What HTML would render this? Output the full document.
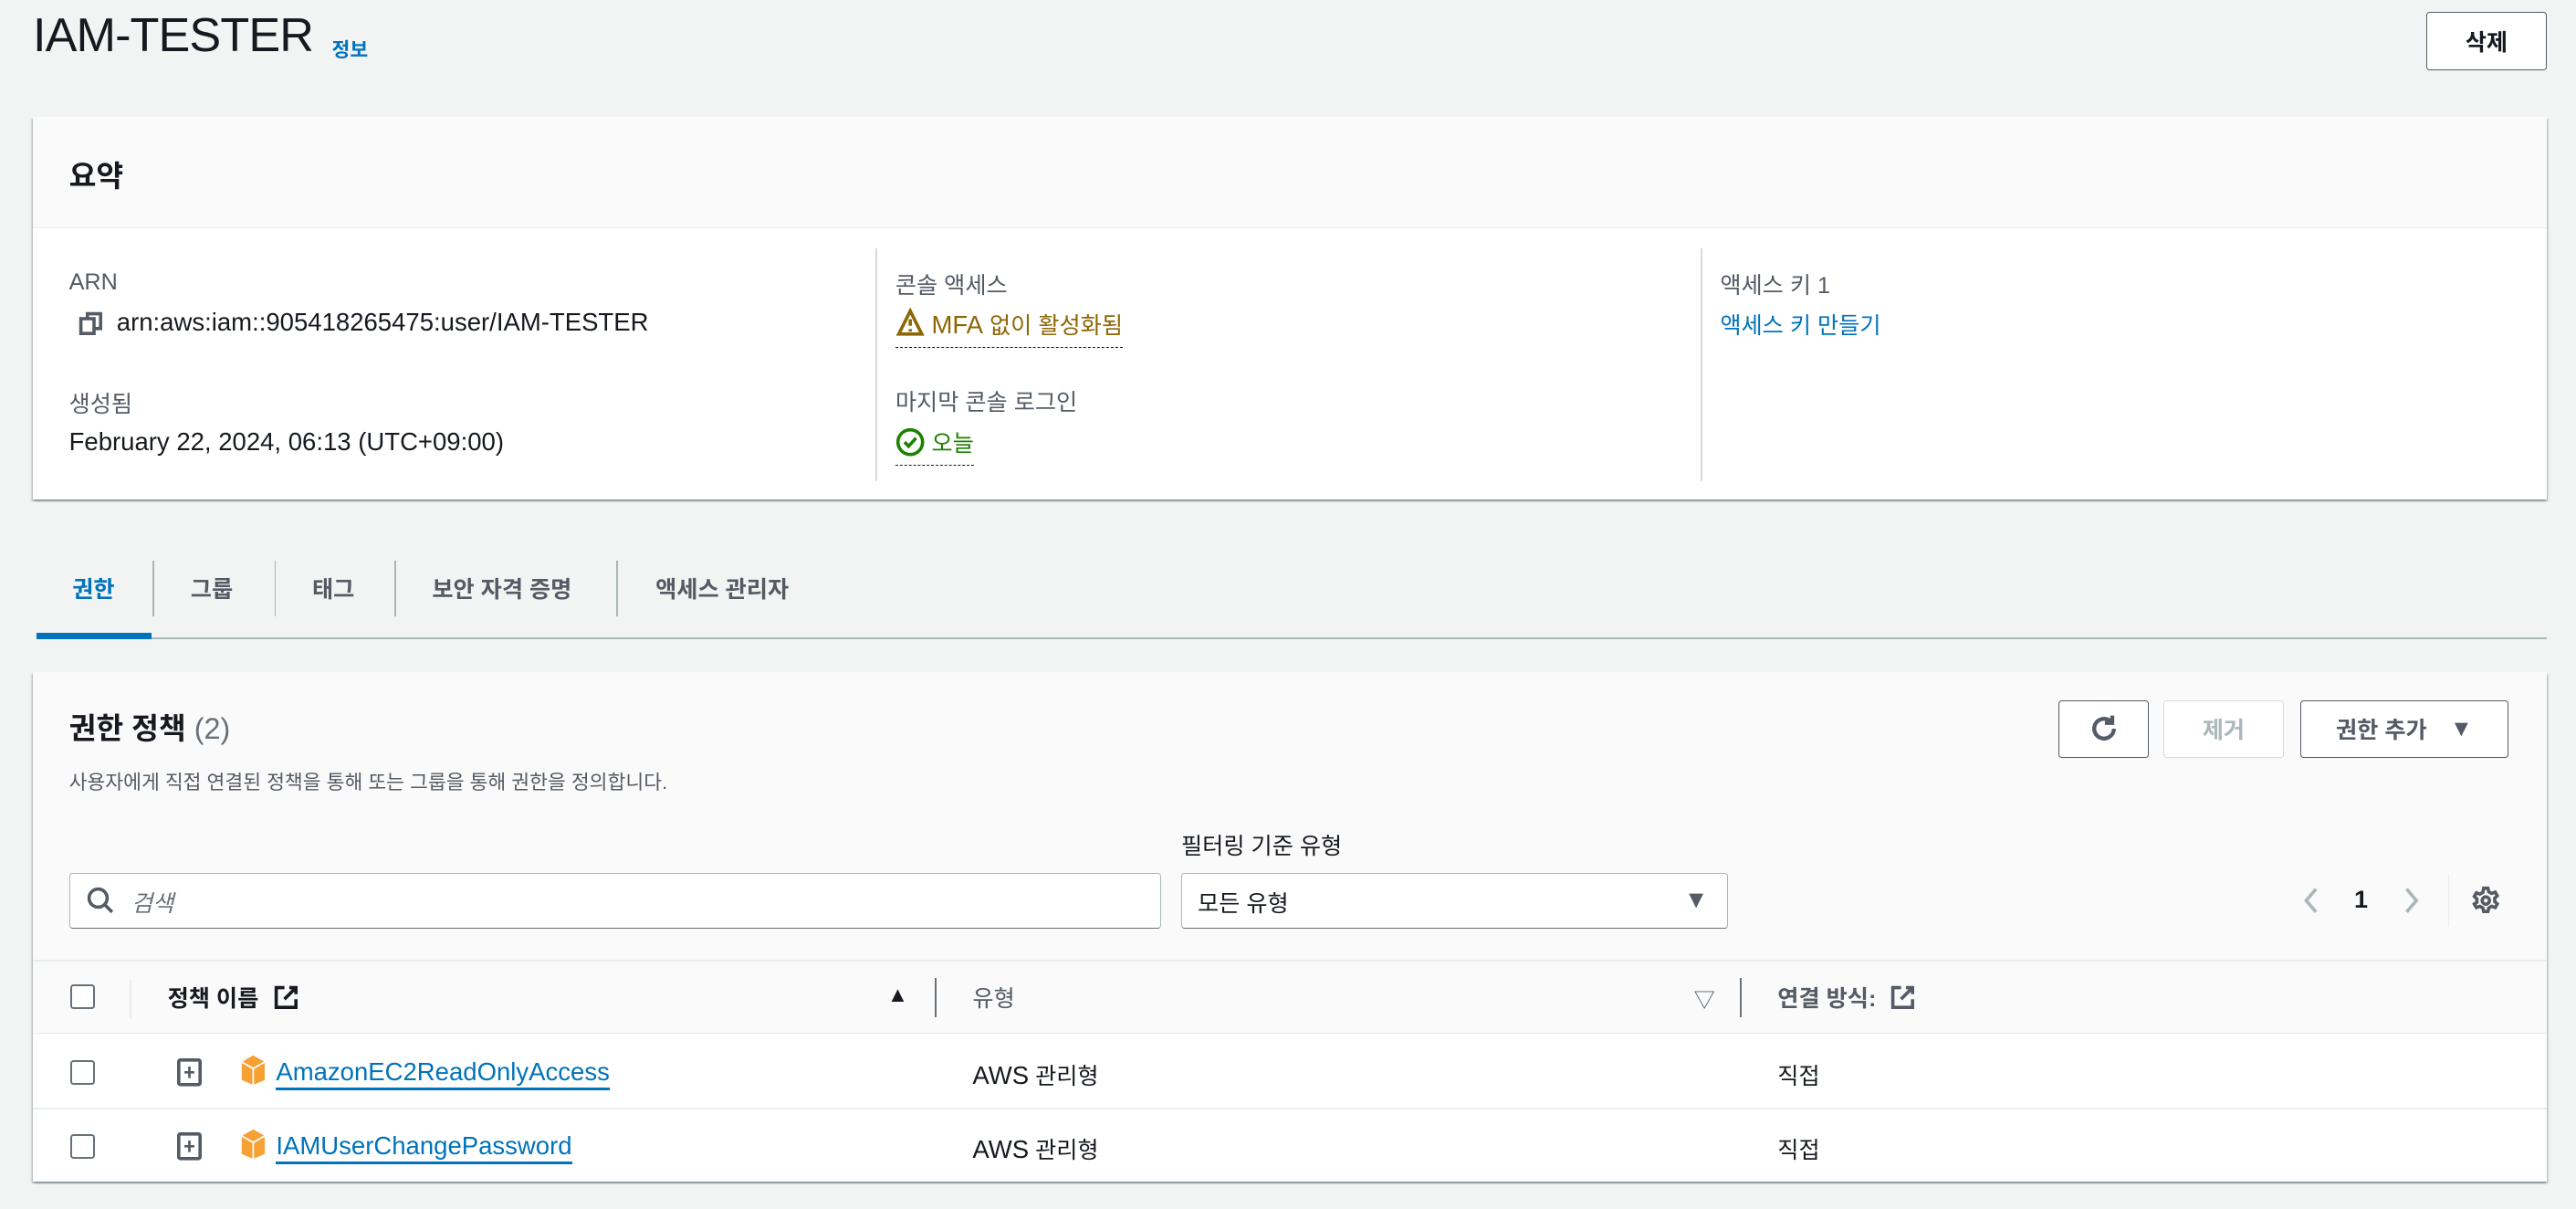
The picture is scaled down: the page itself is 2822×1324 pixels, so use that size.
<!DOCTYPE html>
<html><head><meta charset="utf-8">
<style>
*{box-sizing:border-box;margin:0;padding:0}
html,body{width:2822px;height:1324px;overflow:hidden;background:#f2f3f3}
#r{zoom:1.79974;width:1568px;height:736px;position:relative;font-family:"Liberation Sans","Noto Sans CJK KR",sans-serif;color:#16191f;font-size:14px}
.a{position:absolute;white-space:nowrap}
.l{font-size:15.3px}
.card{position:absolute;background:#fff;box-shadow:0 1px 1px rgba(0,28,36,.3),1px 1px 1px rgba(0,28,36,.15),-1px 1px 1px rgba(0,28,36,.15)}
.lbl{color:#545b64}
.btn{position:absolute;border:1px solid #545b64;border-radius:2px;background:#fff;font-weight:bold;color:#545b64;display:flex;align-items:center;justify-content:center;font-size:14px}
.cb{position:absolute;width:15px;height:15px;border:1.5px solid #687078;border-radius:2px;background:#fff}
.vd{position:absolute;width:1px;background:#d5dbdb}
</style></head><body><div id="r">
<div class="a" style="left:20px;top:5px;font-size:29px;letter-spacing:-.5px">IAM-TESTER</div>
<div class="a" style="left:202px;top:21px;font-size:12px;color:#0073bb;font-weight:bold">정보</div>
<div class="btn" style="left:1477px;top:7px;width:73px;height:36px;color:#16191f">삭제</div>

<div class="card" style="left:20px;top:71px;width:1530px;height:233px">
 <div style="position:absolute;left:0;top:0;right:0;height:68px;background:#fafafa;border-bottom:1px solid #eaeded"></div>
 <div class="a" style="left:22px;top:22px;font-size:18px;font-weight:bold">요약</div>
 <div class="vd" style="left:513px;top:80px;height:142px"></div>
 <div class="vd" style="left:1015px;top:80px;height:142px"></div>
 <div class="a lbl" style="left:22px;top:93px">ARN</div>
 <svg class="a" style="left:27px;top:118px" width="16" height="16" viewBox="0 0 16 16" fill="none" stroke="#545b64" stroke-width="2"><rect x="2" y="5" width="8" height="9"/><path d="M6 5V2h8v9h-4"/></svg>
 <div class="a l" style="left:51px;top:116px">arn:aws:iam::905418265475:user/IAM-TESTER</div>
 <div class="a lbl" style="left:22px;top:164px">생성됨</div>
 <div class="a l" style="left:22px;top:189px">February 22, 2024, 06:13 (UTC+09:00)</div>
 <div class="a lbl" style="left:525px;top:92px">콘솔 액세스</div>
 <svg class="a" style="left:525px;top:116px" width="18" height="18" viewBox="0 0 18 18" fill="none" stroke="#8d6605" stroke-width="2"><path d="M9 2L2 16h14z"/><path d="M9 7v4M9 13v1.5"/></svg>
 <div class="a" style="left:525px;top:116px;color:#8d6605;border-bottom:1px dashed #16191f;padding-bottom:4px;padding-left:22px"><span class="l">MFA</span> 없이 활성화됨</div>
 <div class="a lbl" style="left:525px;top:163px">마지막 콘솔 로그인</div>
 <svg class="a" style="left:525px;top:189px" width="18" height="18" viewBox="0 0 18 18" fill="none" stroke="#1d8102" stroke-width="2"><circle cx="9" cy="9" r="7.5"/><path d="M5.5 9l2.5 2.5 4.5-5"/></svg>
 <div class="a" style="left:525px;top:188px;color:#1d8102;border-bottom:1px dashed #16191f;padding-bottom:4px;padding-left:22px">오늘</div>
 <div class="a lbl" style="left:1027px;top:92px">액세스 키 1</div>
 <div class="a" style="left:1027px;top:116px;color:#0073bb">액세스 키 만들기</div>
</div>

<div style="position:absolute;left:22px;top:388px;width:1528px;height:1px;background:#aab7b8"></div>
<div style="position:absolute;left:22px;top:385px;width:70px;height:4px;background:#0073bb"></div>
<div class="a" style="left:44px;top:348px;font-weight:bold;color:#0073bb">권한</div>
<div class="vd" style="left:93px;top:341px;height:34px;background:#aab7b8"></div>
<div class="a" style="left:116px;top:348px;font-weight:bold;color:#545b64">그룹</div>
<div class="vd" style="left:167px;top:341px;height:34px;background:#aab7b8"></div>
<div class="a" style="left:190px;top:348px;font-weight:bold;color:#545b64">태그</div>
<div class="vd" style="left:240px;top:341px;height:34px;background:#aab7b8"></div>
<div class="a" style="left:263px;top:348px;font-weight:bold;color:#545b64">보안 자격 증명</div>
<div class="vd" style="left:375px;top:341px;height:34px;background:#aab7b8"></div>
<div class="a" style="left:399px;top:348px;font-weight:bold;color:#545b64">액세스 관리자</div>

<div class="card" style="left:20px;top:409px;width:1530px;height:310px">
 <div style="position:absolute;left:0;top:0;right:0;height:175px;background:#fafafa"></div>
 <div style="position:absolute;left:0;top:175px;right:0;height:45px;background:#fafafa;border-bottom:1px solid #eaeded"></div>
 <div class="a" style="left:22px;top:20px;font-size:18px;font-weight:bold">권한 정책 <span style="font-weight:normal;color:#687078">(2)</span></div>
 <div class="a" style="left:22px;top:58px;font-size:12px;color:#545b64">사용자에게 직접 연결된 정책을 통해 또는 그룹을 통해 권한을 정의합니다.</div>
 <div class="btn" style="left:1233px;top:17px;width:55px;height:35px"><svg width="20" height="20" viewBox="0 0 20 20" fill="none" stroke="#545b64" stroke-width="2.4"><path d="M16 10a6 6 0 1 1-2-4.5"/><path d="M15 2v4.5h-4.5"/></svg></div>
 <div class="btn" style="left:1297px;top:17px;width:73px;height:35px;border-color:#d5dbdb;color:#aab7b8">제거</div>
 <div class="btn" style="left:1380px;top:17px;width:127px;height:35px">권한 추가 <span style="margin-left:14px;font-size:14px">▼</span></div>
 <div class="a" style="left:699px;top:95px">필터링 기준 유형</div>
 <div style="position:absolute;left:22px;top:122px;width:665px;height:34px;border:1px solid #aab7b8;border-bottom:1px solid #687078;border-radius:2px;background:#fff"></div>
 <svg class="a" style="left:32px;top:130px" width="18" height="18" viewBox="0 0 18 18" fill="none" stroke="#545b64" stroke-width="2"><circle cx="7.5" cy="7.5" r="5.5"/><path d="M11.5 11.5L16 16"/></svg>
 <div class="a" style="left:60px;top:130px;font-style:italic;color:#687078">검색</div>
 <div style="position:absolute;left:699px;top:122px;width:333px;height:34px;border:1px solid #aab7b8;border-bottom:1px solid #687078;border-radius:2px;background:#fff"></div>
 <div class="a" style="left:709px;top:130px">모든 유형</div>
 <div class="a" style="left:1005px;top:130px;font-size:15px;color:#545b64">▼</div>
 <svg class="a" style="left:1381px;top:130px" width="12" height="18" viewBox="0 0 12 18" fill="none" stroke="#aab7b8" stroke-width="2"><path d="M9 2L3 9l6 7"/></svg>
 <div class="a" style="left:1413px;top:130px;font-weight:bold;font-size:15px">1</div>
 <svg class="a" style="left:1442px;top:130px" width="12" height="18" viewBox="0 0 12 18" fill="none" stroke="#aab7b8" stroke-width="2"><path d="M3 2l6 7-6 7"/></svg>
 <div class="vd" style="left:1470px;top:123px;height:32px;background:#eaeded"></div>
 <svg class="a" style="left:1484px;top:130px" width="18" height="18" viewBox="0 0 18 18" fill="none" stroke="#545b64" stroke-width="2"><circle cx="9" cy="9" r="2.2"/><path d="M7.7 1.5h2.6l.5 2.2 1.8 1 2.1-.8 1.3 2.2-1.6 1.5v2l1.6 1.5-1.3 2.2-2.1-.8-1.8 1-.5 2.2H7.7l-.5-2.2-1.8-1-2.1.8-1.3-2.2L3.6 10V8L2 6.5l1.3-2.2 2.1.8 1.8-1z"/></svg>
 <div style="position:absolute;left:0;top:175px;right:0;height:1px;background:#eaeded"></div>
 <div class="cb" style="left:23px;top:190px"></div>
 <div class="vd" style="left:59px;top:187px;height:24px;background:#eaeded"></div>
 <div class="a" style="left:82px;top:188px;font-weight:bold">정책 이름</div>
 <svg class="a" style="left:146px;top:190px" width="16" height="16" viewBox="0 0 16 16" fill="none" stroke="#16191f" stroke-width="2"><path d="M7 2H2v12h12V9"/><path d="M10 2h4v4M14 2L7 9"/></svg>
 <div class="a" style="left:520px;top:189px;font-size:13px">▲</div>
 <div class="vd" style="left:549px;top:186px;height:24px;background:#687078"></div>
 <div class="a" style="left:572px;top:188px;color:#545b64">유형</div>
 <div class="a" style="left:1011px;top:189px;font-size:13px;color:#545b64">▽</div>
 <div class="vd" style="left:1039px;top:186px;height:24px;background:#687078"></div>
 <div class="a" style="left:1062px;top:188px;color:#545b64;font-weight:bold">연결 방식:</div>
 <svg class="a" style="left:1130px;top:190px" width="16" height="16" viewBox="0 0 16 16" fill="none" stroke="#545b64" stroke-width="2"><path d="M7 2H2v12h12V9"/><path d="M10 2h4v4M14 2L7 9"/></svg>
 <div style="position:absolute;left:0;top:265px;right:0;height:1px;background:#eaeded"></div>

 <div class="cb" style="left:23px;top:236px"></div>
 <svg class="a" style="left:88px;top:235px" width="15" height="17" viewBox="0 0 15 17"><rect x="1" y="1" width="13" height="15" rx="1" fill="none" stroke="#545b64" stroke-width="2"/><path d="M7.5 5v7M4.5 8.5h6" stroke="#545b64" stroke-width="1.5"/></svg>
 <svg class="a" style="left:126px;top:232px" width="16" height="20" viewBox="0 0 16 20"><path d="M8 1l7 4v11l-7 3-7-3V5z" fill="#f7a034"/><path d="M8 9v10M1 5l7 4 7-4" stroke="#fff" stroke-width="1" fill="none"/></svg>
 <div class="a l" style="left:148px;top:234px;color:#0073bb;border-bottom:2px solid #0073bb;line-height:19px">AmazonEC2ReadOnlyAccess</div>
 <div class="a" style="left:572px;top:235px"><span class="l">AWS</span> 관리형</div>
 <div class="a" style="left:1062px;top:235px">직접</div>

 <div class="cb" style="left:23px;top:281px"></div>
 <svg class="a" style="left:88px;top:280px" width="15" height="17" viewBox="0 0 15 17"><rect x="1" y="1" width="13" height="15" rx="1" fill="none" stroke="#545b64" stroke-width="2"/><path d="M7.5 5v7M4.5 8.5h6" stroke="#545b64" stroke-width="1.5"/></svg>
 <svg class="a" style="left:126px;top:277px" width="16" height="20" viewBox="0 0 16 20"><path d="M8 1l7 4v11l-7 3-7-3V5z" fill="#f7a034"/><path d="M8 9v10M1 5l7 4 7-4" stroke="#fff" stroke-width="1" fill="none"/></svg>
 <div class="a l" style="left:148px;top:279px;color:#0073bb;border-bottom:2px solid #0073bb;line-height:19px">IAMUserChangePassword</div>
 <div class="a" style="left:572px;top:280px"><span class="l">AWS</span> 관리형</div>
 <div class="a" style="left:1062px;top:280px">직접</div>
</div>
</div></body></html>
